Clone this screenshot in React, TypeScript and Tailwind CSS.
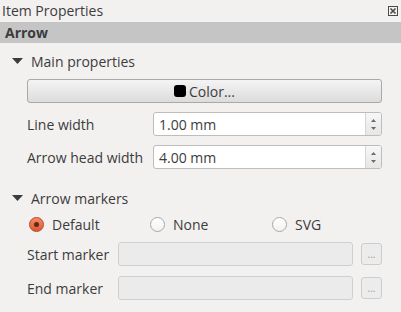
const font = { fontFamily: '"Open Sans", "DejaVu Sans", sans-serif' };

const Caret = () => (
  <svg width="11" height="6" viewBox="0 0 11 6" className="shrink-0">
    <path d="M0 0 H11 L5.5 6 Z" fill="#3c3c3c" />
  </svg>
);

const Spin = () => (
  <div className="flex h-full w-[16px] flex-col items-center justify-center gap-[5px] border-l border-[#d6d6d6] bg-gradient-to-b from-[#f7f7f7] to-[#e6e6e6]">
    <svg width="5" height="3" viewBox="0 0 5 3">
      <path d="M0 3 L2.5 0 L5 3 Z" fill="#6b6b6b" />
    </svg>
    <svg width="5" height="3" viewBox="0 0 5 3">
      <path d="M0 0 L5 0 L2.5 3 Z" fill="#6b6b6b" />
    </svg>
  </div>
);

const SpinInput = ({ value }: { value: string }) => (
  <div className="flex h-[24px] flex-1 items-stretch overflow-hidden rounded-[3px] border border-[#bdbdbd] bg-white">
    <div className="flex flex-1 items-center pl-[5px] text-[14px] text-[#3c3c3c]">{value}</div>
    <Spin />
  </div>
);

const Radio = ({ label, checked }: { label: string; checked?: boolean }) => (
  <div className="flex items-center gap-[8px]">
    {checked ? (
      <div className="flex h-[15px] w-[15px] items-center justify-center rounded-full border border-[#b0482a] bg-gradient-to-b from-[#f58a62] to-[#e0582f]">
        <div className="h-[5px] w-[5px] rounded-full bg-[#5a2a1c]" />
      </div>
    ) : (
      <div className="h-[15px] w-[15px] rounded-full border border-[#a8a8a8] bg-gradient-to-b from-white to-[#f2f2f2]" />
    )}
    <span>{label}</span>
  </div>
);

const MarkerRow = ({ label }: { label: string }) => (
  <div className="flex h-[24px] items-center">
    <span className="w-[91px] shrink-0">{label}</span>
    <div className="h-[24px] w-[235px] rounded-[3px] border border-[#cfcfcf] bg-[#ebebeb]" />
    <div className="ml-[8px] flex h-[22px] w-[21px] items-end justify-center rounded-[3px] border border-[#cdcdcd] bg-[#ececec] pb-[5px] text-[10px] leading-none text-[#9a9a9a]">
      ...
    </div>
  </div>
);

export default function App() {
  return (
    <div className="h-[312px] w-[401px] overflow-hidden bg-[#f2f1f0] text-[14px] text-[#3c3c3c]" style={font}>
      <div className="flex h-[22px] items-center justify-between pl-[2px] pr-[3px]">
        <span className="leading-none">Item Properties</span>
        <svg width="10" height="10" viewBox="0 0 10 10">
          <rect x="0.5" y="0.5" width="9" height="9" fill="none" stroke="#4a4a4a" />
          <path d="M2.5 2.5 L7.5 7.5 M7.5 2.5 L2.5 7.5" stroke="#4a4a4a" strokeWidth="1.6" />
        </svg>
      </div>
      <div className="flex h-[21px] items-center bg-[#c5c5c5] pl-[5px] font-bold">Arrow</div>

      <div className="flex flex-col pl-[12px] pr-[19px]">
        <div className="mt-[10px] flex h-[16px] items-center gap-[8px]">
          <Caret />
          <span>Main properties</span>
        </div>
        <div className="ml-[15px] mt-[10px] flex flex-col">
          <div className="flex h-[24px] items-center justify-center gap-[3px] rounded-[3px] border border-[#a9a9a9] bg-gradient-to-b from-[#f4f4f4] to-[#dcdcdc]">
            <div className="h-[12px] w-[12px] rounded-[3px] bg-black" />
            <span>Color...</span>
          </div>
          <div className="mt-[9px] flex items-center">
            <span className="w-[126px] shrink-0">Line width</span>
            <SpinInput value="1.00 mm" />
          </div>
          <div className="mt-[9px] flex items-center">
            <span className="w-[126px] shrink-0">Arrow head width</span>
            <SpinInput value="4.00 mm" />
          </div>
        </div>

        <div className="mt-[21px] flex h-[16px] items-center gap-[8px]">
          <Caret />
          <span>Arrow markers</span>
        </div>
        <div className="ml-[17px] mt-[10px] flex h-[16px] items-center">
          <div className="w-[121px]">
            <Radio label="Default" checked />
          </div>
          <div className="w-[122px]">
            <Radio label="None" />
          </div>
          <Radio label="SVG" />
        </div>
        <div className="ml-[15px] mt-[10px] flex flex-col gap-[10px]">
          <MarkerRow label="Start marker" />
          <MarkerRow label="End marker" />
        </div>
      </div>
    </div>
  );
}
